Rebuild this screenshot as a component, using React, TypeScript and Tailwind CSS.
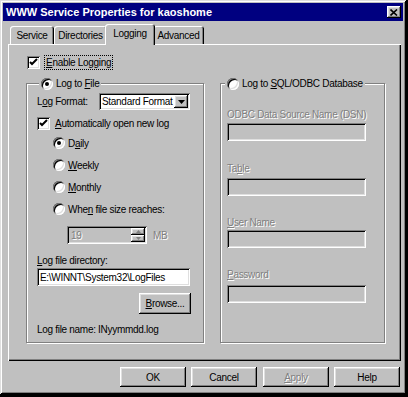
import React from "react";

const raised =
  "shadow-[inset_-1px_-1px_#000,inset_1px_1px_#fff,inset_-2px_-2px_#808080,inset_2px_2px_#dfdfdf]";
const sunken =
  "shadow-[inset_1px_1px_#808080,inset_-1px_-1px_#fff,inset_2px_2px_#000,inset_-2px_-2px_#dfdfdf]";
const dim = "text-[#808080] [text-shadow:1px_1px_0_#fff]";

function U({ children }: { children: React.ReactNode }) {
  return <span className="underline underline-offset-[1px]">{children}</span>;
}

function Radio({ checked }: { checked?: boolean }) {
  return (
    <span
      className={`w-[12px] h-[12px] rounded-full bg-white flex items-center justify-center shrink-0 ${sunken}`}
    >
      {checked && <span className="w-[4px] h-[4px] rounded-full bg-black" />}
    </span>
  );
}

function Check({ checked }: { checked?: boolean }) {
  return (
    <span className={`w-[13px] h-[13px] bg-white flex items-center justify-center shrink-0 ${sunken}`}>
      {checked && (
        <svg width="9" height="9" viewBox="0 0 9 9">
          <path d="M1 4 L3 6 L8 1" stroke="#000" strokeWidth="2" fill="none" />
        </svg>
      )}
    </span>
  );
}

function Field({ w, value, disabled }: { w: string; value?: string; disabled?: boolean }) {
  return (
    <div
      className={`${w} h-[18px] flex items-center px-[3px] ${disabled ? "bg-[#c0c0c0]" : "bg-white"} ${sunken}`}
    >
      {value}
    </div>
  );
}

function Button({ children, disabled, w = "w-[66px]", className = "" }: { children: React.ReactNode; disabled?: boolean; w?: string; className?: string }) {
  return (
    <div
      className={`${w} h-[20px] bg-[#c0c0c0] flex items-center justify-center ${raised} ${disabled ? dim : ""} ${className}`}
    >
      {children}
    </div>
  );
}

function Tab({ label, active }: { label: React.ReactNode; active?: boolean }) {
  return (
    <div
      className={`bg-[#c0c0c0] rounded-t-[3px] flex items-start justify-center shadow-[inset_1px_1px_#fff,inset_-1px_0_#000,inset_-2px_0_#808080] ${
        active ? "relative z-10 h-[21px] -mb-[1px] -mx-[2px] w-[50px] pt-[3px]" : "h-[18px] pt-[3px]"
      }`}
    >
      {label}
    </div>
  );
}

export default function App() {
  return (
    <div className="w-[408px] h-[397px] bg-black text-[10px] tracking-[-0.3px] leading-[13px] whitespace-nowrap text-black font-[family-name:'Liberation_Sans',Arial,sans-serif]">
      <div
        className={`w-[406px] h-[394px] bg-[#c0c0c0] p-[3px] flex flex-col shadow-[inset_1px_1px_#dfdfdf,inset_-1px_-1px_#000,inset_2px_2px_#fff,inset_-2px_-2px_#808080]`}
      >
        {/* title bar */}
        <div className="h-[18px] bg-[#000080] flex items-center justify-between pl-[3px] pr-[2px]">
          <span className="text-white font-bold text-[11px] tracking-normal">WWW Service Properties for kaoshome</span>
          <div className={`w-[14px] h-[12px] bg-[#c0c0c0] flex items-center justify-center ${raised}`}>
            <svg width="8" height="7" viewBox="0 0 8 7">
              <path d="M0.5 0.5 L7 6.5 M7 0.5 L0.5 6.5" stroke="#000" strokeWidth="1.6" />
            </svg>
          </div>
        </div>

        {/* tabs */}
        <div className="h-[23px] flex items-end pl-[7px]">
          <div className="w-[44px]"><Tab label="Service" /></div>
          <div className="w-[53px]"><Tab label="Directories" /></div>
          <Tab label="Logging" active />
          <div className="w-[51px]"><Tab label="Advanced" /></div>
        </div>

        {/* panel */}
        <div
          className="ml-[5px] w-[393px] h-[317px] pt-[12px] pl-[18px] shadow-[inset_1px_1px_#fff,inset_-1px_-1px_#000,inset_-2px_-2px_#808080]"
        >
          <div className="flex items-center gap-[3px] ml-[1px] h-[13px]">
            <Check checked />
            <span className="ml-[2px] outline-1 outline-dotted outline-black px-[1px]">
              <U>E</U>nable Logging
            </span>
          </div>

          <div className="flex mt-[14px] gap-[16px]">
            {/* left group */}
            <div className="relative w-[178px] h-[260px] border border-[#808080] shadow-[inset_1px_1px_#fff,1px_1px_#fff] pl-[10px] pt-[9px]">
              <div className="absolute left-[12px] -top-[7px] px-[2px] bg-[#c0c0c0] flex items-center gap-[3px] h-[13px]">
                <Radio checked />
                <span>
                  Log to <U>F</U>ile
                </span>
              </div>
              <div className="flex items-center h-[17px]">
                <span className="w-[62px]">
                  L<U>o</U>g Format:
                </span>
                <div className={`w-[91px] h-[17px] bg-white flex items-center pl-[3px] pr-[2px] justify-between ${sunken}`}>
                  <span>Standard Format</span>
                  <div className={`w-[14px] h-[13px] bg-[#c0c0c0] flex items-center justify-center ${raised}`}>
                    <svg width="7" height="4" viewBox="0 0 7 4">
                      <path d="M0 0 H7 L3.5 4 Z" fill="#000" />
                    </svg>
                  </div>
                </div>
              </div>
              <div className="flex items-center gap-[5px] mt-[7px] h-[13px]">
                <Check checked />
                <span>
                  <U>A</U>utomatically open new log
                </span>
              </div>
              <div className="flex flex-col gap-[10px] ml-[16px] mt-[7px]">
                <div className="flex items-center gap-[3px] h-[12px]">
                  <Radio checked />
                  <span>
                    D<U>a</U>ily
                  </span>
                </div>
                <div className="flex items-center gap-[3px] h-[12px]">
                  <Radio />
                  <span>
                    <U>W</U>eekly
                  </span>
                </div>
                <div className="flex items-center gap-[3px] h-[12px]">
                  <Radio />
                  <span>
                    <U>M</U>onthly
                  </span>
                </div>
                <div className="flex items-center gap-[3px] h-[12px]">
                  <Radio />
                  <span>
                    Whe<U>n</U> file size reaches:
                  </span>
                </div>
              </div>
              <div className="flex items-center ml-[30px] mt-[11px] h-[18px]">
                <div className={`w-[80px] h-[18px] bg-[#c0c0c0] flex items-center pl-[4px] pr-[2px] justify-between ${sunken}`}>
                  <span className={dim}>19</span>
                  <div className="flex flex-col w-[14px]">
                    <div className={`h-[7px] bg-[#c0c0c0] flex items-center justify-center ${raised}`}>
                      <svg width="5" height="3" viewBox="0 0 5 3"><path d="M2.5 0 L5 3 H0 Z" fill="#808080" /></svg>
                    </div>
                    <div className={`h-[7px] bg-[#c0c0c0] flex items-center justify-center ${raised}`}>
                      <svg width="5" height="3" viewBox="0 0 5 3"><path d="M0 0 H5 L2.5 3 Z" fill="#808080" /></svg>
                    </div>
                  </div>
                </div>
                <span className={`ml-[6px] ${dim}`}>MB</span>
              </div>
              <div className="mt-[10px] h-[13px]">
                <U>L</U>og file directory:
              </div>
              <div className="mt-[1px]">
                <Field w="w-[153px]" value="E:\WINNT\System32\LogFiles" />
              </div>
              <Button w="w-[52px]" className="ml-[102px] mt-[7px] h-[21px]">
                <span>
                  <U>B</U>rowse...
                </span>
              </Button>
              <div className="mt-[9px] h-[13px]">Log file name: INyymmdd.log</div>
            </div>

            {/* right group */}
            <div className="relative w-[165px] h-[260px] border border-[#808080] shadow-[inset_1px_1px_#fff,1px_1px_#fff] pl-[6px] pt-[24px]">
              <div className="absolute left-[4px] -top-[7px] px-[2px] bg-[#c0c0c0] flex items-center gap-[3px] h-[13px]">
                <Radio />
                <span>
                  Log to <U>S</U>QL/ODBC Database
                </span>
              </div>
              <div className={`h-[13px] ${dim}`}>ODBC Data Source Name (DSN)</div>
              <div className="mt-[2px]">
                <Field w="w-[139px]" disabled />
              </div>
              <div className={`h-[13px] mt-[21px] ${dim}`}>
                Ta<U>b</U>le
              </div>
              <div className="mt-[3px]">
                <Field w="w-[139px]" disabled />
              </div>
              <div className={`h-[13px] mt-[20px] ${dim}`}>
                <U>U</U>ser Name
              </div>
              <div className="mt-[1px]">
                <Field w="w-[139px]" disabled />
              </div>
              <div className={`h-[13px] mt-[20px] ${dim}`}>
                <U>P</U>assword
              </div>
              <div className="mt-[4px]">
                <Field w="w-[139px]" disabled />
              </div>
            </div>
          </div>
        </div>

        {/* buttons */}
        <div className="flex mt-[6px]">
          <Button className="ml-[117px]">OK</Button>
          <Button className="ml-[5px]">Cancel</Button>
          <Button className="ml-[6px]" disabled>
            <U>A</U>pply
          </Button>
          <Button className="ml-[5px]">Help</Button>
        </div>
      </div>
    </div>
  );
}
